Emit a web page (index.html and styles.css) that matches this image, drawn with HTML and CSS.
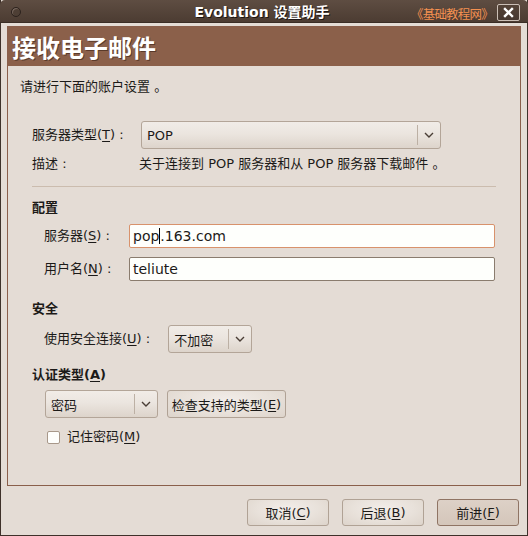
FILE: index.html
```html
<!DOCTYPE html>
<html lang="zh-CN">
<head>
<meta charset="utf-8">
<title>Evolution 设置助手</title>
<link rel="stylesheet" href="styles.css">
</head>
<body>
<div class="window">
  <div class="titlebar">
    <span class="tb-circle"></span>
    <span class="tb-title">Evolution 设置助手</span>
    <span class="watermark">《基础教程网》</span>
    <span class="tb-close">
      <svg width="11" height="11" viewBox="0 0 11 11"><path d="M2 2 L9 9 M9 2 L2 9" stroke="#fff" stroke-width="2.4" stroke-linecap="square"/></svg>
    </span>
  </div>
  <div class="main">
    <div class="frame">
      <div class="header">接收电子邮件</div>
      <div class="content">
        <div class="intro">请进行下面的账户设置 。</div>
        <div class="row row-type">
          <span class="lbl lbl-type">服务器类型(<u>T</u>) :</span>
          <div class="combo combo-type"><span class="combo-text">POP</span><span class="combo-btn"><svg width="10" height="6" viewBox="0 0 10 6"><path d="M1 1 L5 5 L9 1" fill="none" stroke="#4a3e36" stroke-width="1.4"/></svg></span></div>
        </div>
        <div class="row row-desc">
          <span class="lbl lbl-type">描述 :</span>
          <span class="desc">关于连接到 POP 服务器和从 POP 服务器下载邮件 。</span>
        </div>
        <div class="sep"></div>
        <div class="section">配置</div>
        <div class="row row-entry first">
          <span class="lbl lbl-entry">服务器(<u>S</u>) :</span>
          <div class="entry focus"><span>pop</span><span class="caret"></span><span>.163.com</span></div>
        </div>
        <div class="row row-entry">
          <span class="lbl lbl-entry">用户名(<u>N</u>) :</span>
          <div class="entry">teliute</div>
        </div>
        <div class="section sec-security">安全</div>
        <div class="row row-sec">
          <span class="lbl">使用安全连接(<u>U</u>) :</span>
          <div class="combo combo-sec"><span class="combo-text">不加密</span><span class="combo-btn"><svg width="10" height="6" viewBox="0 0 10 6"><path d="M1 1 L5 5 L9 1" fill="none" stroke="#4a3e36" stroke-width="1.4"/></svg></span></div>
        </div>
        <div class="section sec-auth">认证类型(<u>A</u>)</div>
        <div class="row row-auth">
          <div class="combo combo-auth"><span class="combo-text">密码</span><span class="combo-btn"><svg width="10" height="6" viewBox="0 0 10 6"><path d="M1 1 L5 5 L9 1" fill="none" stroke="#4a3e36" stroke-width="1.4"/></svg></span></div>
          <div class="btn btn-check">检查支持的类型(<u>E</u>)</div>
        </div>
        <div class="row row-check">
          <span class="checkbox"></span>
          <span class="lbl">记住密码(<u>M</u>)</span>
        </div>
      </div>
    </div>
    <div class="buttons">
      <div class="btn btn-action">取消(<u>C</u>)</div>
      <div class="btn btn-action">后退(<u>B</u>)</div>
      <div class="btn btn-action btn-default">前进(<u>F</u>)</div>
    </div>
  </div>
</div>
</body>
</html>
```
FILE: styles.css
```css
html, body {
  margin: 0;
  padding: 0;
  background: #e4dcd5;
}
body {
  font-family: "DejaVu Sans", "Noto Sans CJK SC", sans-serif;
  font-size: 13px;
  color: #1c1a18;
}
u {
  text-decoration: underline;
  text-underline-offset: 2px;
}
.window {
  position: relative;
  width: 528px;
  height: 536px;
  box-sizing: border-box;
  border-left: 1px solid #3e312a;
  border-right: 1px solid #3e312a;
  border-bottom: 1px solid #3e312a;
  background: #e4dcd5;
  display: flex;
  flex-direction: column;
}
.titlebar {
  position: relative;
  height: 22px;
  margin: 0 -1px;
  border-radius: 5px 5px 0 0;
  background: linear-gradient(#5e4d42, #4c3c32);
  border-bottom: 1px solid #3a2d25;
  display: flex;
  align-items: center;
  justify-content: center;
}
.tb-circle {
  position: absolute;
  left: 11px;
  top: 7px;
  width: 8px;
  height: 8px;
  border-radius: 50%;
  border: 1px solid #2c221d;
  box-shadow: inset 1px 1px 0 #7a6a60;
  background: #4e3f35;
}
.tb-title {
  color: #fff;
  font-weight: bold;
  font-size: 14px;
  text-shadow: 1px 1px 0 #1e1612;
  margin-right: 4px;
}
.watermark {
  position: absolute;
  left: 411px;
  top: 5px;
  color: #f39050;
  font-family: "Noto Sans CJK SC", sans-serif;
  font-size: 12.5px;
  line-height: 18px;
  letter-spacing: -0.8px;
}
.tb-close {
  position: absolute;
  z-index: 2;
  left: 497px;
  top: 4px;
  width: 21px;
  height: 15px;
  border: 1px solid #cbbfb6;
  border-radius: 2px;
  background: linear-gradient(#544337, #463830);
  display: flex;
  align-items: center;
  justify-content: center;
}
.main {
  flex: 1;
  padding: 3px 6px 0 6px;
  display: flex;
  flex-direction: column;
}
.frame {
  height: 460px;
  box-sizing: border-box;
  border: 1px solid #8a5f4b;
  display: flex;
  flex-direction: column;
}
.header {
  height: 39px;
  background: #8b604a;
  color: #fff;
  font-family: "Noto Sans CJK SC", sans-serif;
  font-weight: bold;
  font-size: 24px;
  line-height: 39px;
  padding-left: 4px;
  text-shadow: 1px 1px 0 #5a3a2a;
}
.content {
  padding: 0 12px;
  display: flex;
  flex-direction: column;
}
.intro {
  margin-top: 13px;
  line-height: 16px;
}
.row {
  display: flex;
  align-items: center;
}
.lbl {
  line-height: 16px;
  white-space: nowrap;
}
.row-type {
  margin-top: 26px;
  padding-left: 12px;
}
.lbl-type {
  width: 109px;
}
.row-desc {
  margin-top: 7px;
  padding-left: 12px;
  line-height: 16px;
}
.combo {
  height: 28px;
  box-sizing: border-box;
  border: 1px solid #b3a598;
  border-radius: 3px;
  background: linear-gradient(#f1ece7 0%, #ebe5df 45%, #ddd4cb 100%);
  display: flex;
  align-items: center;
}
.combo-text {
  flex: 1;
  padding-left: 5px;
  white-space: nowrap;
}
.combo-btn {
  width: 22px;
  height: 20px;
  border-left: 1px solid #bcb0a4;
  display: flex;
  align-items: center;
  justify-content: center;
}
.combo-type {
  width: 300px;
}
.desc {
  margin-left: -2px;
}
.sep {
  margin: 14px 12px 0 12px;
  height: 1px;
  background: #cbbcae;
}
.section {
  font-weight: bold;
  line-height: 16px;
  margin-top: 13px;
  padding-left: 12px;
}
.row-entry {
  padding-left: 24px;
  margin-top: 9px;
}
.row-entry.first {
  margin-top: 8px;
}
.lbl-entry {
  width: 85px;
}
.entry {
  width: 366px;
  height: 24px;
  box-sizing: border-box;
  border: 1px solid #8a7c6e;
  border-radius: 2px;
  background: #fefffc;
  padding-left: 3px;
  font-size: 14px;
  display: flex;
  align-items: center;
  white-space: nowrap;
}
.entry.focus {
  border-color: #d8926c;
}
.caret {
  display: inline-block;
  width: 1px;
  height: 16px;
  background: #000;
}
.sec-security {
  margin-top: 20px;
}
.row-sec {
  padding-left: 24px;
  margin-top: 8px;
}
.combo-sec {
  width: 84px;
  margin-left: 18px;
}
.sec-auth {
  margin-top: 14px;
}
.row-auth {
  padding-left: 25px;
  margin-top: 7px;
  gap: 9px;
}
.combo-auth {
  width: 113px;
}
.btn {
  height: 28px;
  box-sizing: border-box;
  border: 1px solid #b0a295;
  border-radius: 3px;
  background: radial-gradient(ellipse at 50% 35%, #f2ede9 0%, #e8e1da 55%, #ddd4cb 100%);
  display: flex;
  align-items: center;
  justify-content: center;
  white-space: nowrap;
}
.btn-check {
  width: 119px;
}
.row-check {
  padding-left: 27px;
  margin-top: 11px;
}
.checkbox {
  width: 11px;
  height: 11px;
  border: 1px solid #a8988a;
  border-radius: 2px;
  background: #fefefc;
  margin-right: 7px;
}
.buttons {
  display: flex;
  justify-content: flex-end;
  gap: 13px;
  margin-top: 13px;
  padding-right: 2px;
}
.btn-action {
  width: 82px;
  height: 27px;
}
.btn-default {
  border-color: #8f7464;
  background: linear-gradient(#ddd1c7, #d4c6ba);
}
```
